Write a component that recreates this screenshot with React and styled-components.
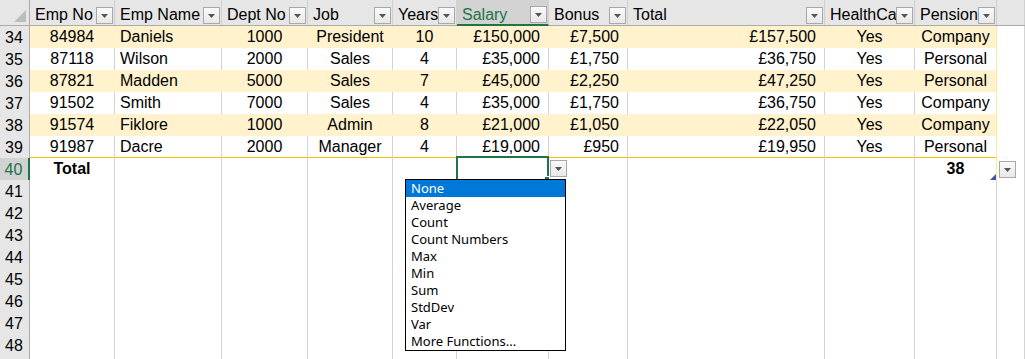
import React from 'react';
import styled, { createGlobalStyle, css } from 'styled-components';

const GlobalStyle = createGlobalStyle`
  html, body {
    margin: 0;
    padding: 0;
    background: #fff;
  }
  body {
    font-family: "Liberation Sans", Arial, sans-serif;
    overflow: hidden;
  }
`;

const COLS = '30px 85px 107px 86px 85px 64px 92px 79px 197px 90px 82px 28px';

const Sheet = styled.div`
  width: 1025px;
  height: 359px;
  overflow: hidden;
  font-size: 16px;
  color: #000;
`;

const HeaderRow = styled.div`
  display: grid;
  grid-template-columns: ${COLS};
  height: 26px;
  background: #e6e6e6;
  box-sizing: border-box;
  border-bottom: 1px solid #ababab;
`;

const Corner = styled.div`
  position: relative;
  border-right: 1px solid #ababab;
  &::after {
    content: '';
    position: absolute;
    right: 3px;
    bottom: 3px;
    width: 12px;
    height: 12px;
    background: #bdbdbd;
    clip-path: polygon(100% 0, 100% 100%, 0 100%);
  }
`;

const HeadCell = styled.div`
  display: flex;
  min-width: 0;
  box-sizing: border-box;
  border-right: 1px solid #d0d0d0;
  padding-right: 1px;
  ${p => p.$selected && css`
    background: #d2d2d2;
    color: #217346;
    border-bottom: 2px solid #217346;
    margin-bottom: -1px;
  `}
`;

const HeadLabel = styled.div`
  flex: 1;
  min-width: 0;
  overflow: hidden;
  white-space: nowrap;
  line-height: 18px;
  padding: 6px 0 0 5px;
`;

const DropButton = styled.div`
  flex: none;
  width: 15px;
  height: 15px;
  border: 1px solid #a8a8a8;
  background: linear-gradient(#fafafa, #e8e8e8);
  display: flex;
  align-items: center;
  justify-content: center;
  align-self: flex-end;
  margin-bottom: 1px;
  box-sizing: content-box;
`;

const FloatButton = styled(DropButton)`
  position: absolute;
  top: ${p => p.$top}px;
  left: calc(100% + ${p => p.$gap}px);
  margin: 0;
  z-index: 5;
`;

const Row = styled.div`
  display: grid;
  grid-template-columns: ${COLS};
  height: 22px;
`;

const RowHead = styled.div`
  box-sizing: border-box;
  background: ${p => (p.$selected ? '#d2d2d2' : '#e6e6e6')};
  color: ${p => (p.$selected ? '#217346' : '#000')};
  border-right: ${p => (p.$selected ? '2px solid #217346' : '1px solid #ababab')};
  border-bottom: 1px solid #d4d4d4;
  text-align: center;
  line-height: 21px;
  padding: 1px 1px 0 0;
`;

const fills = {
  band: css`
    background: #fff2cc;
    border-right: 1px solid #fff2cc;
    border-bottom: 1px solid #ffd966;
  `,
  light: css`
    background: #fff;
    border-right: 1px solid #d4d4d4;
    border-bottom: 1px solid #ffd966;
  `,
  last: css`
    background: #fff;
    border-right: 1px solid #d4d4d4;
    border-bottom: 3px double #ffc000;
  `,
  total: css`
    background: #fff;
    border-right: 1px solid #d4d4d4;
    border-bottom: 1px solid #ffd966;
  `,
  plain: css`
    background: #fff;
    border-right: 1px solid #d4d4d4;
    border-bottom: 1px solid #d4d4d4;
  `,
};

const Cell = styled.div`
  position: relative;
  box-sizing: border-box;
  white-space: nowrap;
  line-height: 20px;
  padding-top: 1px;
  text-align: ${p => p.$align || 'left'};
  font-weight: ${p => (p.$bold ? 700 : 400)};
  padding-left: ${p => (p.$align === 'left' ? '5px' : '0')};
  padding-right: ${p => (p.$align === 'right' ? '8px' : '0')};
  ${p => fills[p.$kind]}
  ${p => p.$edge && css`border-right-color: #ffe699;`}
`;

const Selection = styled.div`
  position: absolute;
  top: -2px;
  left: -1px;
  right: -1px;
  bottom: -1px;
  border: 2px solid #217346;
  pointer-events: none;
  &::after {
    content: '';
    position: absolute;
    right: -4px;
    bottom: -4px;
    width: 5px;
    height: 5px;
    background: #217346;
    border: 1px solid #fff;
  }
`;

const ResizeHandle = styled.div`
  position: absolute;
  right: 0;
  bottom: 0;
  width: 6px;
  height: 6px;
  background: #3f51b5;
  clip-path: polygon(100% 0, 100% 100%, 0 100%);
`;

const FunctionList = styled.ul`
  position: absolute;
  left: -52px;
  top: 21px;
  width: 159px;
  margin: 0;
  padding: 0;
  list-style: none;
  background: #fff;
  border: 1px solid #000;
  font-family: "Noto Sans", "Open Sans", sans-serif;
  font-size: 13px;
  font-weight: 400;
  z-index: 10;
  text-align: left;
`;

const FunctionItem = styled.li`
  height: 17px;
  line-height: 17px;
  padding-left: 5px;
  background: ${p => (p.$active ? '#0078d7' : 'transparent')};
  color: ${p => (p.$active ? '#fff' : '#000')};
`;

const Arrow = () => (
  <svg width="7" height="4" viewBox="0 0 7 4">
    <polygon points="0,0 7,0 3.5,4" fill="#555" />
  </svg>
);

const headers = [
  'Emp No', 'Emp Name', 'Dept No', 'Job', 'Years', 'Salary',
  'Bonus', 'Total', 'HealthCare', 'Pension',
];

const aligns = [
  'center', 'left', 'center', 'center', 'center',
  'right', 'right', 'right', 'center', 'center',
];

const data = [
  [34, '84984', 'Daniels', '1000', 'President', '10', '£150,000', '£7,500', '£157,500', 'Yes', 'Company'],
  [35, '87118', 'Wilson', '2000', 'Sales', '4', '£35,000', '£1,750', '£36,750', 'Yes', 'Personal'],
  [36, '87821', 'Madden', '5000', 'Sales', '7', '£45,000', '£2,250', '£47,250', 'Yes', 'Personal'],
  [37, '91502', 'Smith', '7000', 'Sales', '4', '£35,000', '£1,750', '£36,750', 'Yes', 'Company'],
  [38, '91574', 'Fiklore', '1000', 'Admin', '8', '£21,000', '£1,050', '£22,050', 'Yes', 'Company'],
  [39, '91987', 'Dacre', '2000', 'Manager', '4', '£19,000', '£950', '£19,950', 'Yes', 'Personal'],
];

const functions = [
  'None', 'Average', 'Count', 'Count Numbers', 'Max',
  'Min', 'Sum', 'StdDev', 'Var', 'More Functions...',
];

// row 49 only peeks in at the bottom edge, its number is below the fold
const emptyRows = [41, 42, 43, 44, 45, 46, 47, 48, null];

export default function App() {
  return (
    <Sheet>
      <GlobalStyle />
      <HeaderRow>
        <Corner />
        {headers.map(h => (
          <HeadCell key={h} $selected={h === 'Salary'}>
            <HeadLabel>{h}</HeadLabel>
            <DropButton><Arrow /></DropButton>
          </HeadCell>
        ))}
        <HeadCell />
      </HeaderRow>

      {data.map((r, i) => {
        const kind = i === data.length - 1 ? 'last' : i % 2 === 0 ? 'band' : 'light';
        return (
          <Row key={r[0]}>
            <RowHead>{r[0]}</RowHead>
            {r.slice(1).map((v, j) => (
              <Cell key={j} $kind={kind} $align={aligns[j]} $edge={j === 9}>{v}</Cell>
            ))}
            <Cell $kind="plain" />
          </Row>
        );
      })}

      <Row>
        <RowHead $selected>40</RowHead>
        <Cell $kind="total" $align="center" $bold>Total</Cell>
        <Cell $kind="total" />
        <Cell $kind="total" />
        <Cell $kind="total" />
        <Cell $kind="total" />
        <Cell $kind="total">
          <Selection />
          <FloatButton $top={2} $gap={2}><Arrow /></FloatButton>
          <FunctionList>
            {functions.map((f, k) => (
              <FunctionItem key={f} $active={k === 0}>{f}</FunctionItem>
            ))}
          </FunctionList>
        </Cell>
        <Cell $kind="total" />
        <Cell $kind="total" />
        <Cell $kind="total" />
        <Cell $kind="total" $align="center" $bold $edge>
          38
          <ResizeHandle />
          <FloatButton $top={3} $gap={3}><Arrow /></FloatButton>
        </Cell>
        <Cell $kind="plain" />
      </Row>

      {emptyRows.map((n, i) => (
        <Row key={i}>
          <RowHead>{n}</RowHead>
          {Array.from({ length: 11 }, (_, j) => <Cell key={j} $kind="plain" />)}
        </Row>
      ))}
    </Sheet>
  );
}
